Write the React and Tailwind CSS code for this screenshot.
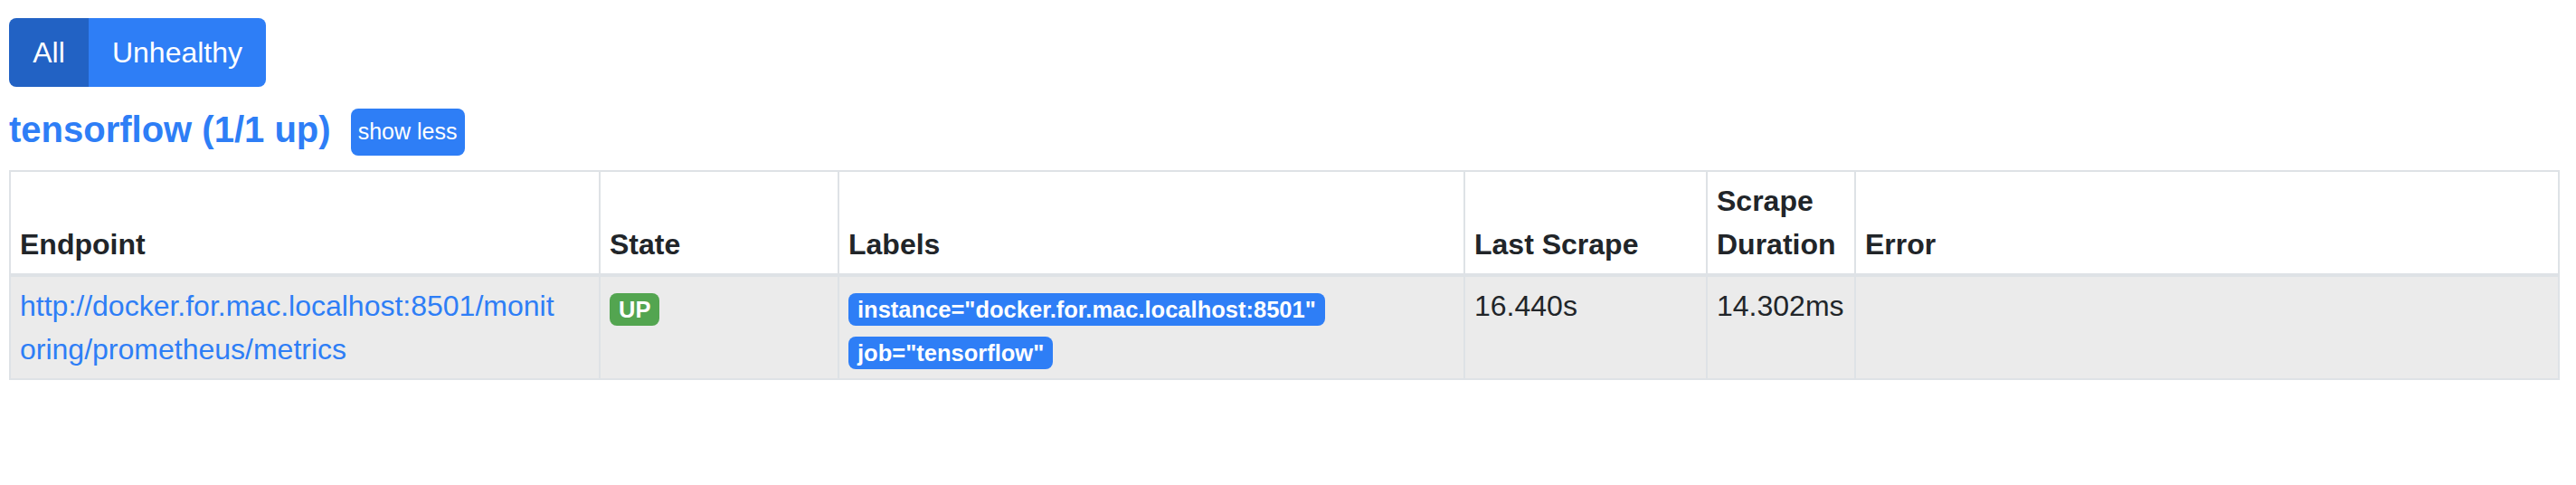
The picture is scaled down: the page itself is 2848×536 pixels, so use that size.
import React from "react";

const columns = [
  { title: "Endpoint", width: "w-[652px]" },
  { title: "State", width: "w-[264px]" },
  { title: "Labels", width: "w-[692px]" },
  { title: "Last Scrape", width: "w-[268px]" },
  { title: "Scrape Duration", width: "w-[164px]" },
  { title: "Error", width: "w-[778px]" },
];

const labels = ['instance="docker.for.mac.localhost:8501"', 'job="tensorflow"'];

const Badge = ({ color, children }) => (
  <span
    className={`block h-[36px] leading-[36px] px-[10px] rounded-[8px] text-white font-bold text-[25.5px] whitespace-nowrap ${color}`}
  >
    {children}
  </span>
);

const App = () => {
  return (
    <div className="min-h-[536px] bg-white px-[10px] pt-[20px] font-['Liberation_Sans',Arial,sans-serif] text-[#212529]">
      {/* filter toggle */}
      <div className="inline-flex h-[76px] rounded-[8px] overflow-hidden text-[32px] text-white">
        <button className="w-[88px] h-full flex items-center justify-center bg-[#2262c4]">All</button>
        <button className="w-[196px] h-full flex items-center justify-center bg-[#2e7ef6]">Unhealthy</button>
      </div>

      {/* job header */}
      <div className="mt-[24px] flex items-start">
        <h2 className="text-[40px] leading-[46px] font-bold text-[#2e7ef6]">tensorflow (1/1 up)</h2>
        <button className="ml-[22px] w-[126px] h-[52px] rounded-[8px] bg-[#2e7ef6] text-white text-[25px] flex items-center justify-center">
          show less
        </button>
      </div>

      <table className="mt-[16px] w-[2820px] table-fixed border-separate border-spacing-0 border-l-2 border-t-2 border-[#dee2e6] text-[32px] leading-[48px]">
        <thead>
          <tr className="bg-white">
            {columns.map((col) => (
              <th
                key={col.title}
                className={`${col.width} align-bottom text-left font-bold px-[10px] py-[8px] border-r-2 border-b-4 border-[#dee2e6]`}
              >
                {col.title}
              </th>
            ))}
          </tr>
        </thead>
        <tbody>
          <tr className="bg-[#ebebeb]">
            <td className="align-top px-[10px] py-[8px] border-r-2 border-b-2 border-[#dee2e6]">
              <a className="text-[#2e7ef6]">
                http://docker.for.mac.localhost:8501/monit
                <br />
                oring/prometheus/metrics
              </a>
            </td>
            <td className="align-top px-[10px] py-[8px] border-r-2 border-b-2 border-[#dee2e6]">
              <div className="h-[48px] pt-[10px] flex items-start">
                <Badge color="bg-[#53a550]">UP</Badge>
              </div>
            </td>
            <td className="align-top px-[10px] py-[8px] border-r-2 border-b-2 border-[#dee2e6]">
              {labels.map((l) => (
                <div key={l} className="h-[48px] pt-[10px] flex items-start">
                  <Badge color="bg-[#2e7ef6]">{l}</Badge>
                </div>
              ))}
            </td>
            <td className="align-top px-[10px] py-[8px] border-r-2 border-b-2 border-[#dee2e6]">16.440s</td>
            <td className="align-top px-[10px] py-[8px] border-r-2 border-b-2 border-[#dee2e6]">14.302ms</td>
            <td className="align-top px-[10px] py-[8px] border-r-2 border-b-2 border-[#dee2e6]"></td>
          </tr>
        </tbody>
      </table>
    </div>
  );
};

export default App;
